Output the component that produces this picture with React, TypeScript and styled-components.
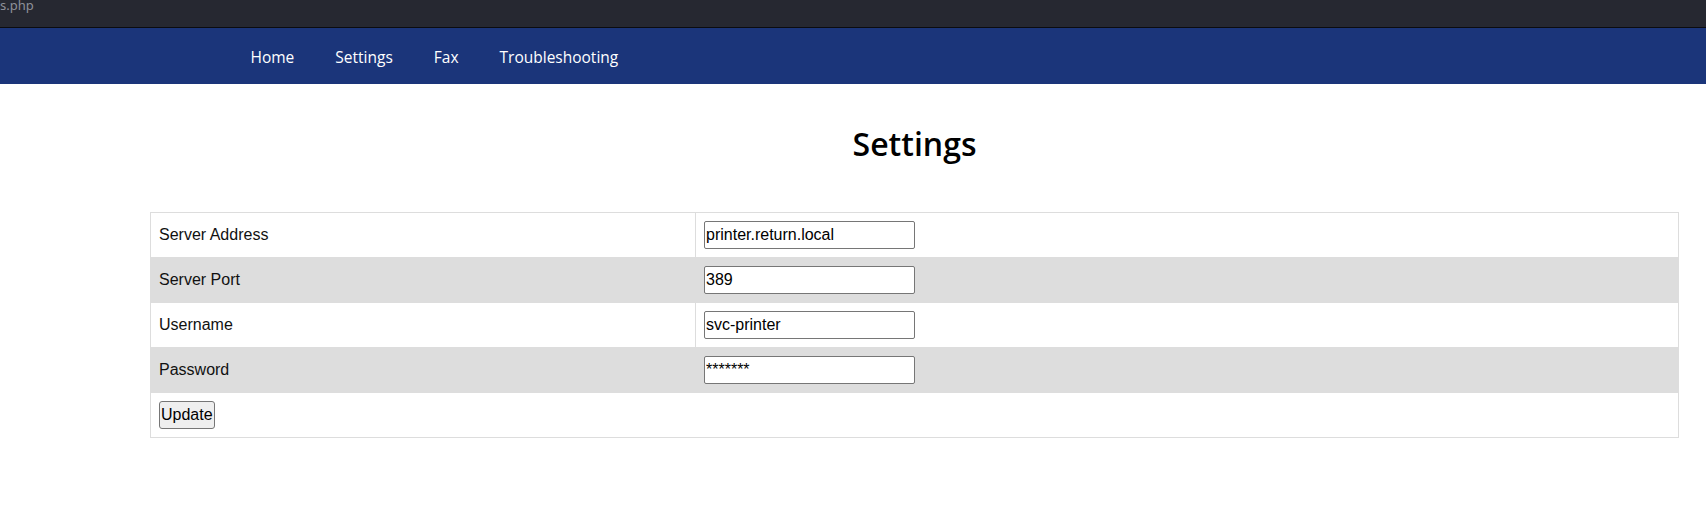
import { FC } from "react";
import styled, { createGlobalStyle } from "styled-components";

const GlobalStyle = createGlobalStyle`
  html, body {
    margin: 0;
    padding: 0;
    background: #ffffff;
  }
`;

const TopBar = styled.div`
  height: 27px;
  background: #262831;
  border-bottom: 1px solid #0b0c10;
  overflow: hidden;
`;

const UrlText = styled.div`
  margin-top: -2px;
  font-family: "Noto Sans", sans-serif;
  font-size: 13px;
  line-height: 14px;
  color: #8e9099;
`;

const NavBar = styled.nav`
  box-sizing: border-box;
  height: 56px;
  background: #1b357a;
  display: flex;
  align-items: center;
  padding: 2px 0 0 230px;
`;

const NavLink = styled.a`
  font-family: "Open Sans", sans-serif;
  font-size: 15.5px;
  color: #ffffff;
  text-decoration: none;
  padding: 0 20.5px;
`;

const Main = styled.main`
  padding: 42px 27px 0 150px;
`;

const Heading = styled.h1`
  margin: 0 0 50px;
  text-align: center;
  font-family: "Open Sans", sans-serif;
  font-weight: 600;
  font-size: 32px;
  line-height: 36px;
  color: #000000;
`;

const SettingsTable = styled.table`
  width: 100%;
  border-collapse: collapse;
  border: 1px solid #dddddd;
  font-family: "Liberation Sans", Arial, sans-serif;
  font-size: 16px;
  color: #111111;
`;

const Row = styled.tr<{ $shaded?: boolean }>`
  background: ${(p) => (p.$shaded ? "#dddddd" : "#ffffff")};
`;

const Cell = styled.td<{ $label?: boolean }>`
  padding: 8px;
  border: 1px solid #dddddd;
  vertical-align: middle;
  width: ${(p) => (p.$label ? "528px" : "auto")};
`;

const TextInput = styled.input`
  box-sizing: border-box;
  width: 211px;
  height: 28px;
  padding: 0 1px;
  border: 1px solid #767676;
  border-radius: 2px;
  background: #ffffff;
  font-family: "Liberation Sans", Arial, sans-serif;
  font-size: 16px;
  color: #000000;
  display: block;
`;

const Button = styled.button`
  box-sizing: border-box;
  height: 28px;
  padding: 0 1px;
  border: 1px solid #767676;
  border-radius: 3px;
  background: #efefef;
  font-family: "Liberation Sans", Arial, sans-serif;
  font-size: 16px;
  color: #000000;
  display: block;
`;

const fields = [
  { label: "Server Address", value: "printer.return.local" },
  { label: "Server Port", value: "389" },
  { label: "Username", value: "svc-printer" },
  { label: "Password", value: "*******" },
];

const App: FC = () => {
  return (
    <>
      <GlobalStyle />
      <TopBar>
        <UrlText>s.php</UrlText>
      </TopBar>
      <NavBar>
        <NavLink href="#">Home</NavLink>
        <NavLink href="#">Settings</NavLink>
        <NavLink href="#">Fax</NavLink>
        <NavLink href="#">Troubleshooting</NavLink>
      </NavBar>
      <Main>
        <Heading>Settings</Heading>
        <form onSubmit={(e) => e.preventDefault()}>
          <SettingsTable>
            <tbody>
              {fields.map((f, i) => (
                <Row key={f.label} $shaded={i % 2 === 1}>
                  <Cell $label>{f.label}</Cell>
                  <Cell>
                    <TextInput type="text" defaultValue={f.value} />
                  </Cell>
                </Row>
              ))}
              <Row>
                <Cell colSpan={2}>
                  <Button type="submit">Update</Button>
                </Cell>
              </Row>
            </tbody>
          </SettingsTable>
        </form>
      </Main>
    </>
  );
};

export default App;
